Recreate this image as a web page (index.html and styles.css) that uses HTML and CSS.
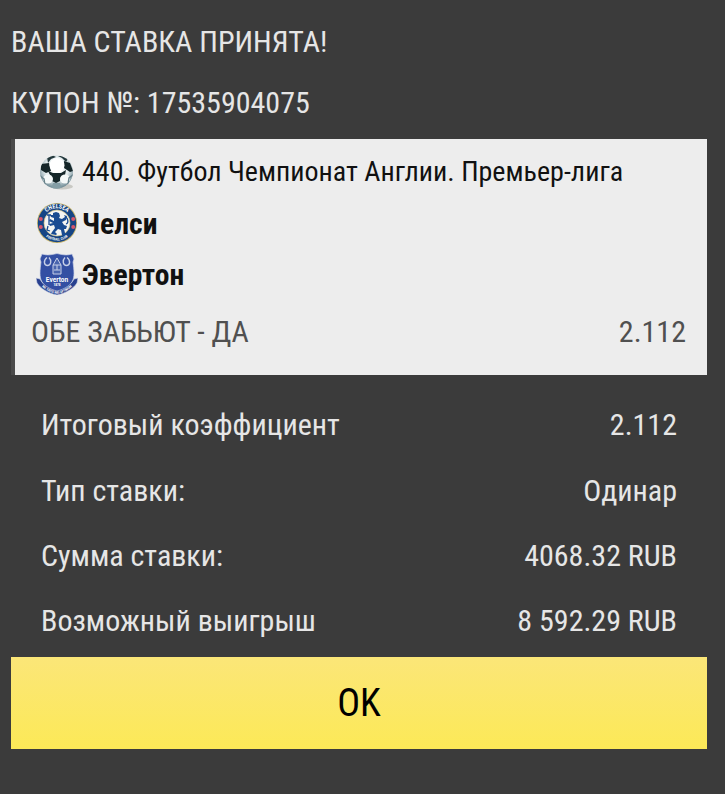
FILE: index.html
```
<!DOCTYPE html>
<html lang="ru">
<head>
    <meta charset="UTF-8">
    <meta name="viewport" content="width=device-width, initial-scale=1.0">
    <title>Купон</title>
<link rel="stylesheet" href="styles.css">
</head>
<body>
<div class="coupon">
    <p class="message">ВАША СТАВКА ПРИНЯТА!</p>
    <p class="message">КУПОН №: 17535904075</p>

    <div class="card">
        <div class="league">
            <svg class="icon" viewBox="0 0 42 42">
                <defs>
                    <radialGradient id="ball" cx="0.5" cy="0.4" r="0.6">
                        <stop offset="0" stop-color="#ffffff"/>
                        <stop offset="0.6" stop-color="#e2ebed"/>
                        <stop offset="1" stop-color="#6b8791"/>
                    </radialGradient>
                    <clipPath id="ballClip"><circle cx="20.500" cy="21" r="16.500"/></clipPath>
                </defs>
                <ellipse cx="26" cy="35.500" rx="11" ry="3" fill="#c9c9c4"/>
                <circle cx="20.500" cy="21" r="16.500" fill="url(#ball)"/>
                <g clip-path="url(#ballClip)">
                    <path d="M11 6l5-2 4 2-5 2-3 4zM22 5l6 0 4 3-2 3-4-4z" fill="#24383c"/>
                    <path d="M5 13l8-1 2 8-5 2-5-3zM28 10l6 2 3 8-3 1-6-4z" fill="#152629"/>
                    <path d="M12 20l5 2h8l5-3-1 5-4 2-1 4-4 2-4-2-1-4z" fill="#152629"/>
                    <path d="M17 32h7l2 6H15z" fill="#839da5"/>
                    <ellipse cx="12" cy="28" rx="5" ry="4.500" fill="#f4f8f8"/>
                    <ellipse cx="29" cy="28" rx="5" ry="4.500" fill="#f4f8f8"/>
                    <circle cx="21" cy="14.500" r="7.500" fill="#ffffff"/>
                    <path d="M3 24l5 4 1 6M38 23l-5 4-1 6" stroke="#68828a" stroke-width="1.400" fill="none"/>
                </g>
            </svg>
            <span>440. Футбол Чемпионат Англии. Премьер-лига</span>
        </div>
        <div class="team">
            <svg class="icon" viewBox="0 0 42 42">
                <defs>
                    <path id="chTop" d="M6.2 21a14.8 14.8 0 0 1 29.6 0"/>
                    <path id="chBottom" d="M3.5 21a17.5 17.5 0 0 0 35 0"/>
                </defs>
                <circle cx="21" cy="21" r="20" fill="#c9b56b"/>
                <circle cx="21" cy="21" r="19.2" fill="#164585"/>
                <circle cx="21" cy="21" r="13" fill="#f4f5f3" stroke="#d3c385" stroke-width="0.7"/>
                <text class="crest-top"><textPath href="#chTop" startOffset="50%">CHELSEA</textPath></text>
                <text class="crest-bottom"><textPath href="#chBottom" startOffset="50%">FOOTBALL CLUB</textPath></text>
                <circle cx="4.8" cy="17" r="2" fill="#d6566b"/>
                <circle cx="4.8" cy="25" r="2" fill="#d6566b"/>
                <circle cx="37.2" cy="17" r="2" fill="#d6566b"/>
                <circle cx="37.2" cy="25" r="2" fill="#d6566b"/>
                <path d="M17 11l3-1 3 1 1 3-1 2 3 1 3-2-1-2 3 1-1 4-4 2 2 3 3 1-1 3-2 0 1 4 2 1v1h-5l-1-5-3-1-3 3 2 2-1 1-5-1 1-2 3-4-1-3-4 1-1-2 4-1-4-2 1-2 4 2 0-3-3-1-1-2 3 0z" fill="#194b92"/>
                <path d="M13 13v10M11 13h4M12 24l-1 4 3 1M30 22c3-1 2-5 0-7" stroke="#194b92" stroke-width="1.3" fill="none"/>
            </svg>
            <span>Челси</span>
        </div>
        <div class="team">
            <svg class="icon" viewBox="0 0 42 42">
                <path d="M6 1c5 1.5 9 1 15-.5C27 2 31 2.500 36 1l2 5-1 3c1 8 2 15-1 20-3 6-9 8-15 12C15 37 9 35 6 29 3 24 4 17 5 9L4 6z" fill="#334fa3" stroke="#cbd2e7" stroke-width="0.7"/>
                <path d="M11 4.500c-4 3-3 8 .5 8s4.500-5 1.500-8M29 4.500c-3 3-2 8 1.500 8s4.500-5 .5-8" fill="none" stroke="#c8d1e8" stroke-width="1.400"/>
                <path d="M17 21v-9l4-7 4 7v9zM17 12h8M21 12v5M18 17h6" fill="#4965ae" stroke="#c8d1e8" stroke-width="1"/>
                <path d="M0 25l4 1c3 6 9 10 17 12 8-2 14-6 17-12l4-1-1 5c-4 6-11 10-20 12C12 40 5 36 1 30z" fill="#28408f" stroke="#d5daea" stroke-width="0.6"/>
                <defs><path id="evMotto" d="M2 30c7 7 12 9.500 19 11 7-1.500 12-4 19-11"/></defs>
                <text class="crest-motto"><textPath href="#evMotto" startOffset="50%">NIL SATIS NISI OPTIMUM</textPath></text>
                <text class="crest-name" x="21" y="28.500">Everton</text>
                <text class="crest-year" x="21" y="33">1878</text>
            </svg>
            <span>Эвертон</span>
        </div>
        <div class="outcome">
            <span>ОБЕ ЗАБЬЮТ - ДА</span>
            <span>2.112</span>
        </div>
    </div>

    <div class="details">
        <div class="row"><span>Итоговый коэффициент</span><span>2.112</span></div>
        <div class="row"><span>Тип ставки:</span><span>Одинар</span></div>
        <div class="row"><span>Сумма ставки:</span><span>4068.32 RUB</span></div>
        <div class="row"><span>Возможный выигрыш</span><span>8 592.29 RUB</span></div>
    </div>

    <button class="ok-button" type="button">OK</button>
</div>
</body>
</html>
```
FILE: styles.css
```
body {
    margin: 0;
    min-height: 794px;
    background-color: #3b3b3b;
    color: #e6e6e6;
    font-family: "Roboto Condensed", Roboto, sans-serif;
    font-stretch: 75%;
    font-size: 30px;
    line-height: 36px;
}
.coupon {
    padding: 24px 18px 0 11px;
}
.message {
    margin: 0 0 25px;
}
.message + .message {
    margin-bottom: 18px;
}
.card {
    box-sizing: border-box;
    height: 236px;
    padding-top: 12px;
    border-left: 4px solid #4b4b4b;
    background-color: #ededed;
    color: #111;
}
.league, .team {
    display: flex;
    align-items: center;
    gap: 4px;
    height: 42px;
    margin-bottom: 9px;
    padding-left: 21px;
}
.league {
    font-size: 28px;
}
.team {
    font-size: 29.6px;
    font-weight: 700;
}
.team span {
    padding-top: 2px;
}
.icon {
    width: 42px;
    height: 42px;
    flex: none;
}
.crest-top, .crest-bottom, .crest-motto, .crest-name, .crest-year {
    fill: #fff;
    text-anchor: middle;
}
.crest-top {
    font-size: 6px;
}
.crest-bottom {
    font-size: 3.5px;
}
.crest-motto {
    font-size: 3.3px;
}
.crest-name {
    font-family: Roboto, sans-serif;
    font-stretch: 100%;
    font-size: 6.5px;
}
.crest-year {
    font-size: 3.5px;
}
.outcome {
    display: flex;
    justify-content: space-between;
    padding: 10px 21px 0 16px;
    color: #505050;
}
.details {
    padding: 17px 30px 0;
}
.row {
    display: flex;
    justify-content: space-between;
    height: 65px;
    line-height: 65px;
}
.row:first-child {
    height: 66px;
}
.ok-button {
    display: block;
    width: 100%;
    height: 92px;
    margin-top: 4px;
    padding: 0;
    border: none;
    background: linear-gradient(#fbe678, #fce957);
    color: #000;
    font: inherit;
    font-stretch: 75%;
    font-size: 38px;
    cursor: pointer;
}
```
